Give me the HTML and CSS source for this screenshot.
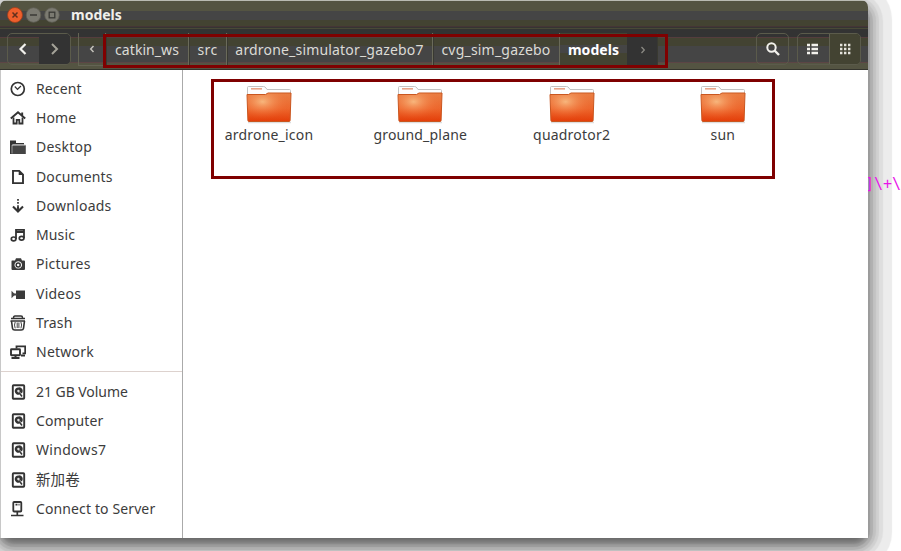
FILE: index.html
```html
<!DOCTYPE html>
<html lang="en">
<head>
<meta charset="utf-8">
<title>models</title>
<link rel="stylesheet" href="styles.css">
</head>
<body>
<svg class="defs" aria-hidden="true">
  <defs>
    <linearGradient id="fold" x1="0" y1="0" x2="0" y2="1">
      <stop offset="0" stop-color="#e8854a"/><stop offset=".55" stop-color="#ec6a30"/><stop offset="1" stop-color="#e23c08"/>
    </linearGradient>
    <radialGradient id="glow" cx=".35" cy=".3" r=".65">
      <stop offset="0" stop-color="#ffd9a0" stop-opacity=".65"/><stop offset="1" stop-color="#f04a10" stop-opacity="0.1"/>
    </radialGradient>
    <symbol id="folder" viewBox="0 0 48 40">
      <path d="M3 38.500H46" stroke="#ddd" stroke-width="1.500"/>
      <path d="M2.500 12V3.500Q2.500 2.500 3.500 2.500H18.500Q20 2.500 21 4L22 5.500H44.500Q45.500 5.500 45.500 6.500V12Z" fill="#fdfdfd" stroke="#c3c3c3"/>
      <path d="M6 4.800H17" stroke="#e9a58a" stroke-width="1.600"/>
      <path d="M2 10.500H20.500L23 9H46L45.100 36.500Q45 37.500 44.100 37.500H3.900Q3 37.500 2.900 36.500Z" fill="url(#fold)" stroke="#c9561f"/>
      <path d="M2.500 11H21L23.500 9.500H45.500L44.600 37H3.400Z" fill="url(#glow)"/>
    </symbol>
    <symbol id="disk" viewBox="0 0 16 16">
      <rect x="2.800" y="1.300" width="11.400" height="13.400" rx=".8" fill="none" stroke="#333" stroke-width="1.900"/>
      <path d="M8.600 3.400a3.700 3.700 0 1 0 1 7.200l-1.600-3.500 4 2.300A3.700 3.700 0 0 0 8.600 3.400Z" fill="#333"/>
      <circle cx="8.400" cy="7" r="1.200" fill="#ddd"/>
      <path d="M9 8.500 12 12.500" stroke="#333" stroke-width="1.500"/>
    </symbol>
  </defs>
</svg>
<div class="window">
  <header class="titlebar">
    <svg class="controls" width="56" height="18" viewBox="0 0 56 18">
      <circle cx="9" cy="9" r="7.500" fill="#ee5f2c" stroke="#9f3d1c" stroke-width=".8"/>
      <path d="M6.500 6.500l5 5m0-5l-5 5" stroke="#62301d" stroke-width="1.500"/>
      <circle cx="27.500" cy="9" r="7.300" fill="#7b7a71" stroke="#5f5e54" stroke-width=".8"/>
      <path d="M24 9h7" stroke="#3a3a36" stroke-width="1.500"/>
      <circle cx="46" cy="9" r="7.300" fill="#7b7a71" stroke="#5f5e54" stroke-width=".8"/>
      <rect x="43.200" y="6.200" width="5.600" height="5.600" fill="none" stroke="#3a3a36" stroke-width="1.300"/>
    </svg>
    <span class="title">models</span>
  </header>
  <div class="toolbar">
    <div class="group nav">
      <button class="on"><svg width="12" height="14" viewBox="0 0 12 14"><path d="M7.500 2 2.500 7l5 5" fill="none" stroke="#f2f1ec" stroke-width="2.200"/></svg></button>
      <button class="dark"><svg width="12" height="14" viewBox="0 0 12 14"><path d="M3 2 8 7l-5 5" fill="none" stroke="#a5a399" stroke-width="2"/></svg></button>
    </div>
    <nav class="path">
      <button class="more"><svg width="6" height="8" viewBox="0 0 6 8"><path d="M4.500 1 1.700 4l2.800 3" fill="none" stroke="#c4c2ba" stroke-width="1.500"/></svg></button>
      <button class="c1">catkin_ws</button>
      <button class="c2">src</button>
      <button class="c3">ardrone_simulator_gazebo7</button>
      <button class="c4">cvg_sim_gazebo</button>
      <button class="c5">models</button>
      <button class="next"><svg width="6" height="8" viewBox="0 0 6 8"><path d="M1.500 1 4.300 4 1.500 7" fill="none" stroke="#8b8a84" stroke-width="1.300"/></svg></button>
      <span class="mark"></span>
    </nav>
    <div class="group search">
      <button><svg width="16" height="16" viewBox="0 0 16 16"><circle cx="6.500" cy="6.500" r="4.200" fill="none" stroke="#f2f1ec" stroke-width="2"/><path d="M9.500 9.500 14 14" stroke="#f2f1ec" stroke-width="2.400"/></svg></button>
    </div>
    <div class="group views">
      <button><svg width="14" height="12" viewBox="0 0 14 12"><path d="M1 2h3m1.500 0H12M1 6h3m1.500 0H12M1 10h3m1.500 0H12" stroke="#f2f1ec" stroke-width="2.400"/></svg></button>
      <button class="pressed"><svg width="12" height="12" viewBox="0 0 12 12"><path d="M1 2h2.400m1.600 0h2.400m1.600 0h2.400M1 6h2.400m1.600 0h2.400m1.600 0h2.400M1 10h2.400m1.600 0h2.400m1.600 0h2.400" stroke="#e5e4dc" stroke-width="2.300"/></svg></button>
    </div>
  </div>
  <div class="body">
    <aside class="sidebar">
      <ul>
        <li><svg viewBox="0 0 16 16"><circle cx="7.800" cy="8" r="6.500" fill="none" stroke="#333" stroke-width="1.700"/><path d="M4.800 5.500 7.500 8.300 11 5" fill="none" stroke="#333" stroke-width="1.200"/></svg><span>Recent</span></li>
        <li><svg viewBox="0 0 16 16"><path d="M.8 8.500 8 2.200l7.200 6.300M12.200 2.500v3" fill="none" stroke="#333" stroke-width="1.900"/><path d="M3.500 7.500v6h3.200v-3.700h2.600v3.700h3.200v-6" fill="none" stroke="#333" stroke-width="1.800"/></svg><span>Home</span></li>
        <li><svg viewBox="0 0 16 16"><path d="M0 15V1.500h6V4h8v1.500H2.500V15Z" fill="#333"/><path d="M3.300 6.300H15.800V15H1.500V8Z" fill="#444"/><path d="M2 14.500V6H15.500" fill="none" stroke="#bbb" stroke-width=".7"/></svg><span class="mid">Desktop</span></li>
        <li><svg viewBox="0 0 16 16"><path d="M3 1.900h6.200L13 5.700v8.400H3Z" fill="none" stroke="#333" stroke-width="1.900"/><path d="M8.700 1.500V6H13.500" fill="#333"/></svg><span>Documents</span></li>
        <li><svg viewBox="0 0 16 16"><path d="M8 1v8" stroke="#333" stroke-width="1.700" stroke-dasharray="1.700 1.400"/><path d="M8 9v4.500M3 8.600l5 5 5-5" fill="none" stroke="#333" stroke-width="2.100"/></svg><span class="mid">Downloads</span></li>
        <li><svg viewBox="0 0 16 16"><path d="M6 12V2.800h8v8.500M6 5h8" fill="none" stroke="#333" stroke-width="1.800"/><ellipse cx="3.600" cy="11.900" rx="2.300" ry="1.900" fill="none" stroke="#333" stroke-width="1.700"/><ellipse cx="11.600" cy="11.300" rx="2.300" ry="1.900" fill="none" stroke="#333" stroke-width="1.700"/></svg><span>Music</span></li>
        <li><svg viewBox="0 0 16 16"><path fill-rule="evenodd" d="M2 4.500h3L6 2.300h5l1 2.200h2q1 0 1 1V13q0 1-1 1H2.500q-1 0-1-1V5.500q0-1 .5-1ZM8.200 5.200a3.700 3.700 0 1 0 .1 0Z" fill="#3a3a3a"/><circle cx="8.200" cy="8.900" r="2" fill="none" stroke="#333" stroke-width="1.500"/></svg><span class="mid">Pictures</span></li>
        <li><svg viewBox="0 0 16 16"><rect x="6" y="4.500" width="9" height="8.500" fill="#3a3a3a"/><path d="M1.500 4.800 5.200 8.500 1.500 12.200Z" fill="#444"/><path d="M4 8.500h3" stroke="#444" stroke-width="2"/></svg><span class="mid">Videos</span></li>
        <li><svg viewBox="0 0 16 16"><path d="M3.500 2.700Q3.500 1 5 1h6Q12.500 1 12.500 2.700M1 3.500h14M.5 6h14.500" fill="none" stroke="#333" stroke-width="1.500"/><path d="M1.500 6 2.500 13.300Q2.800 15 4.800 15h6.400q2 0 2.300-1.700L14.500 6" fill="none" stroke="#333" stroke-width="1.600"/><path d="M5.200 7q-1.400 3 0 6.300M7.200 7.500V13M8.900 7.500V13M10.900 7q1.400 3 0 6.300" fill="none" stroke="#444" stroke-width="1"/></svg><span>Trash</span></li>
        <li><svg viewBox="0 0 16 16"><path d="M6.500 4.500V2.300h8.700v7H12.500" fill="none" stroke="#333" stroke-width="1.800"/><rect x="1" y="5.300" width="9" height="6" rx=".5" fill="#fff" stroke="#333" stroke-width="1.900"/><path d="M5.500 11v2.500M1.500 14h8M11 11.500h4" stroke="#333" stroke-width="2"/></svg><span class="mid">Network</span></li>
      </ul>
      <ul class="devices">
        <li><svg><use href="#disk"/></svg><span class="tight">21 GB Volume</span></li>
        <li><svg><use href="#disk"/></svg><span>Computer</span></li>
        <li><svg><use href="#disk"/></svg><span class="wide">Windows7</span></li>
        <li><svg><use href="#disk"/></svg><span class="cjk">新加卷</span></li>
        <li><svg viewBox="0 0 16 16"><rect x="3.300" y="1" width="8" height="9.500" rx=".8" fill="none" stroke="#333" stroke-width="1.800"/><path d="M5.500 3.700h2m1 0h1M7.300 10.500V14M1 14.500h12.500" stroke="#333" stroke-width="1.700"/></svg><span>Connect to Server</span></li>
      </ul>
    </aside>
    <main class="files">
      <div class="grid">
        <figure><svg><use href="#folder"/></svg><figcaption>ardrone_icon</figcaption></figure>
        <figure><svg><use href="#folder"/></svg><figcaption>ground_plane</figcaption></figure>
        <figure><svg><use href="#folder"/></svg><figcaption>quadrotor2</figcaption></figure>
        <figure><svg><use href="#folder"/></svg><figcaption>sun</figcaption></figure>
      </div>
    </main>
  </div>
</div>
<div class="terminal">]\+\</div>
</body>
</html>
```
FILE: styles.css
```css
* { box-sizing: border-box; }
body {
  margin: 0;
  width: 901px;
  height: 551px;
  overflow: hidden;
  position: relative;
  background: #fff;
  font: 14px "Noto Sans", "Noto Sans CJK SC", sans-serif;
  color: #3c3c3c;
}
.defs { position: absolute; width: 0; height: 0; }
.terminal {
  position: absolute;
  left: 865px;
  top: 174px;
  width: 36px;
  font: 15px/20px "DejaVu Sans Mono", monospace;
  color: #e815e8;
  clip-path: inset(0 0 0 3px);
  white-space: nowrap;
}
.window {
  position: relative;
  width: 868px;
  height: 538px;
  border-radius: 7px 7px 0 0;
  display: flex;
  flex-direction: column;
}
/* Stepped drop shadow, rounder than the window it lies under */
.window::before {
  content: "";
  position: absolute;
  inset: 0;
  z-index: -1;
  border-radius: 14px;
  box-shadow:
    0 8px 3px -7px #686868,
    0 8px 3px -4px #787878,
    0 7px 2px -1px #888,
    0 7px 1px 2px #9c9c9c,
    0 7px 1px 5px #b0b0b0,
    0 7px 1px 8px #c2c2c2,
    0 7px 1px 11px #d0d0d0,
    0 7px 1px 15px #dedede,
    0 7px 1px 24px #ececec;
}
.titlebar {
  height: 28px;
  display: flex;
  align-items: center;
  gap: 9px;
  padding: 2px 0 0 6px;
  border-radius: 7px 7px 0 0;
  background: linear-gradient(#b9bbb2 0 1px, #545442 1px 11px, #454545 11px 20px, #434332 20px 26px, #453535 26px 27px, #353533 27px);
}
.title { color: #f0efea; font-weight: 700; font-size: 14px; line-height: 20px; }
.toolbar {
  height: 42px;
  padding: 5px 7px 4px;
  display: flex;
  background: linear-gradient(#494936 0 1px, #333 1px 9px, #553d3d 9px 10px, #434332 10px 18px, #454545 18px 34px, #5c4545 34px 35px, #545442 35px 41px, #34342d 41px);
}
button {
  padding: 0;
  border: 0;
  background: none;
  color: #dcdbd4;
  font: inherit;
  letter-spacing: .06px;
  display: flex;
  align-items: center;
  justify-content: center;
}
.group { display: flex; height: 32px; border: 1px solid #5b5b4b; border-radius: 5px; overflow: hidden; }
.group button { flex: 1; }
.nav { width: 64px; }
.nav .dark { background: #333; }
.search { width: 33px; margin-left: auto; }
.views { width: 64px; margin-left: 8px; }
.views .pressed { background: #434332; border-left: 1px solid #626252; }
.path { display: flex; height: 33px; margin-left: 7px; position: relative; }
.path button { border-right: 1px solid #6a6a5a; box-shadow: 1px 0 #393931; white-space: nowrap; line-height: 20px; }
.path .more { width: 28px; border-left: 1px solid #646454; border-bottom: 1px solid #646454; }
.path .c1 { width: 83px; }
.path .c2 { width: 38px; letter-spacing: .4px; }
.path .c3 { width: 206px; letter-spacing: .18px; }
.path .c4 { width: 127px; letter-spacing: .2px; }
.path .c5 { width: 68px; color: #fff; font-weight: 700; border-color: #333; background: linear-gradient(#434332 12px, #454545 12px 20px, #434332 20px); }
.path .next { width: 29px; background: #333; border: 0; }
.mark {
  position: absolute;
  left: 25px;
  top: 1px;
  width: 565px;
  height: 34px;
  border: 3px solid #7f0000;
}
.body { flex: 1; display: flex; min-height: 0; border-left: 1px solid #c8c8c8; background: #fff; }
.sidebar { width: 182px; border-right: 1px solid #aaa; padding-top: 4px; }
ul { list-style: none; margin: 0; padding: 0; }
li { height: 29.3px; padding-left: 9px; display: flex; align-items: center; gap: 10px; }
li svg { width: 16px; height: 16px; flex: none; }
li span { line-height: 20px; white-space: nowrap; letter-spacing: .12px; }
li .tight { letter-spacing: -.05px; }
li .mid { letter-spacing: .25px; }
li .wide { letter-spacing: .3px; }
li .cjk { font-size: 14.5px; line-height: 18px; margin-top: -2px; }
.devices { border-top: 1px solid #ddd2ce; margin-top: 4px; padding-top: 5px; }
.files { flex: 1; padding: 9px 0 0 28px; }
.grid {
  width: 564px;
  height: 100px;
  border: 3px solid #7f0000;
  display: grid;
  grid-template-columns: repeat(4, 151.3px);
  padding-top: 2px;
}
figure { margin: 0 0 0 -20.500px; width: 151px; display: flex; flex-direction: column; align-items: center; }
figure svg { width: 48px; height: 40px; }
figcaption { line-height: 20px; letter-spacing: .2px; position: relative; top: .5px; }
```
